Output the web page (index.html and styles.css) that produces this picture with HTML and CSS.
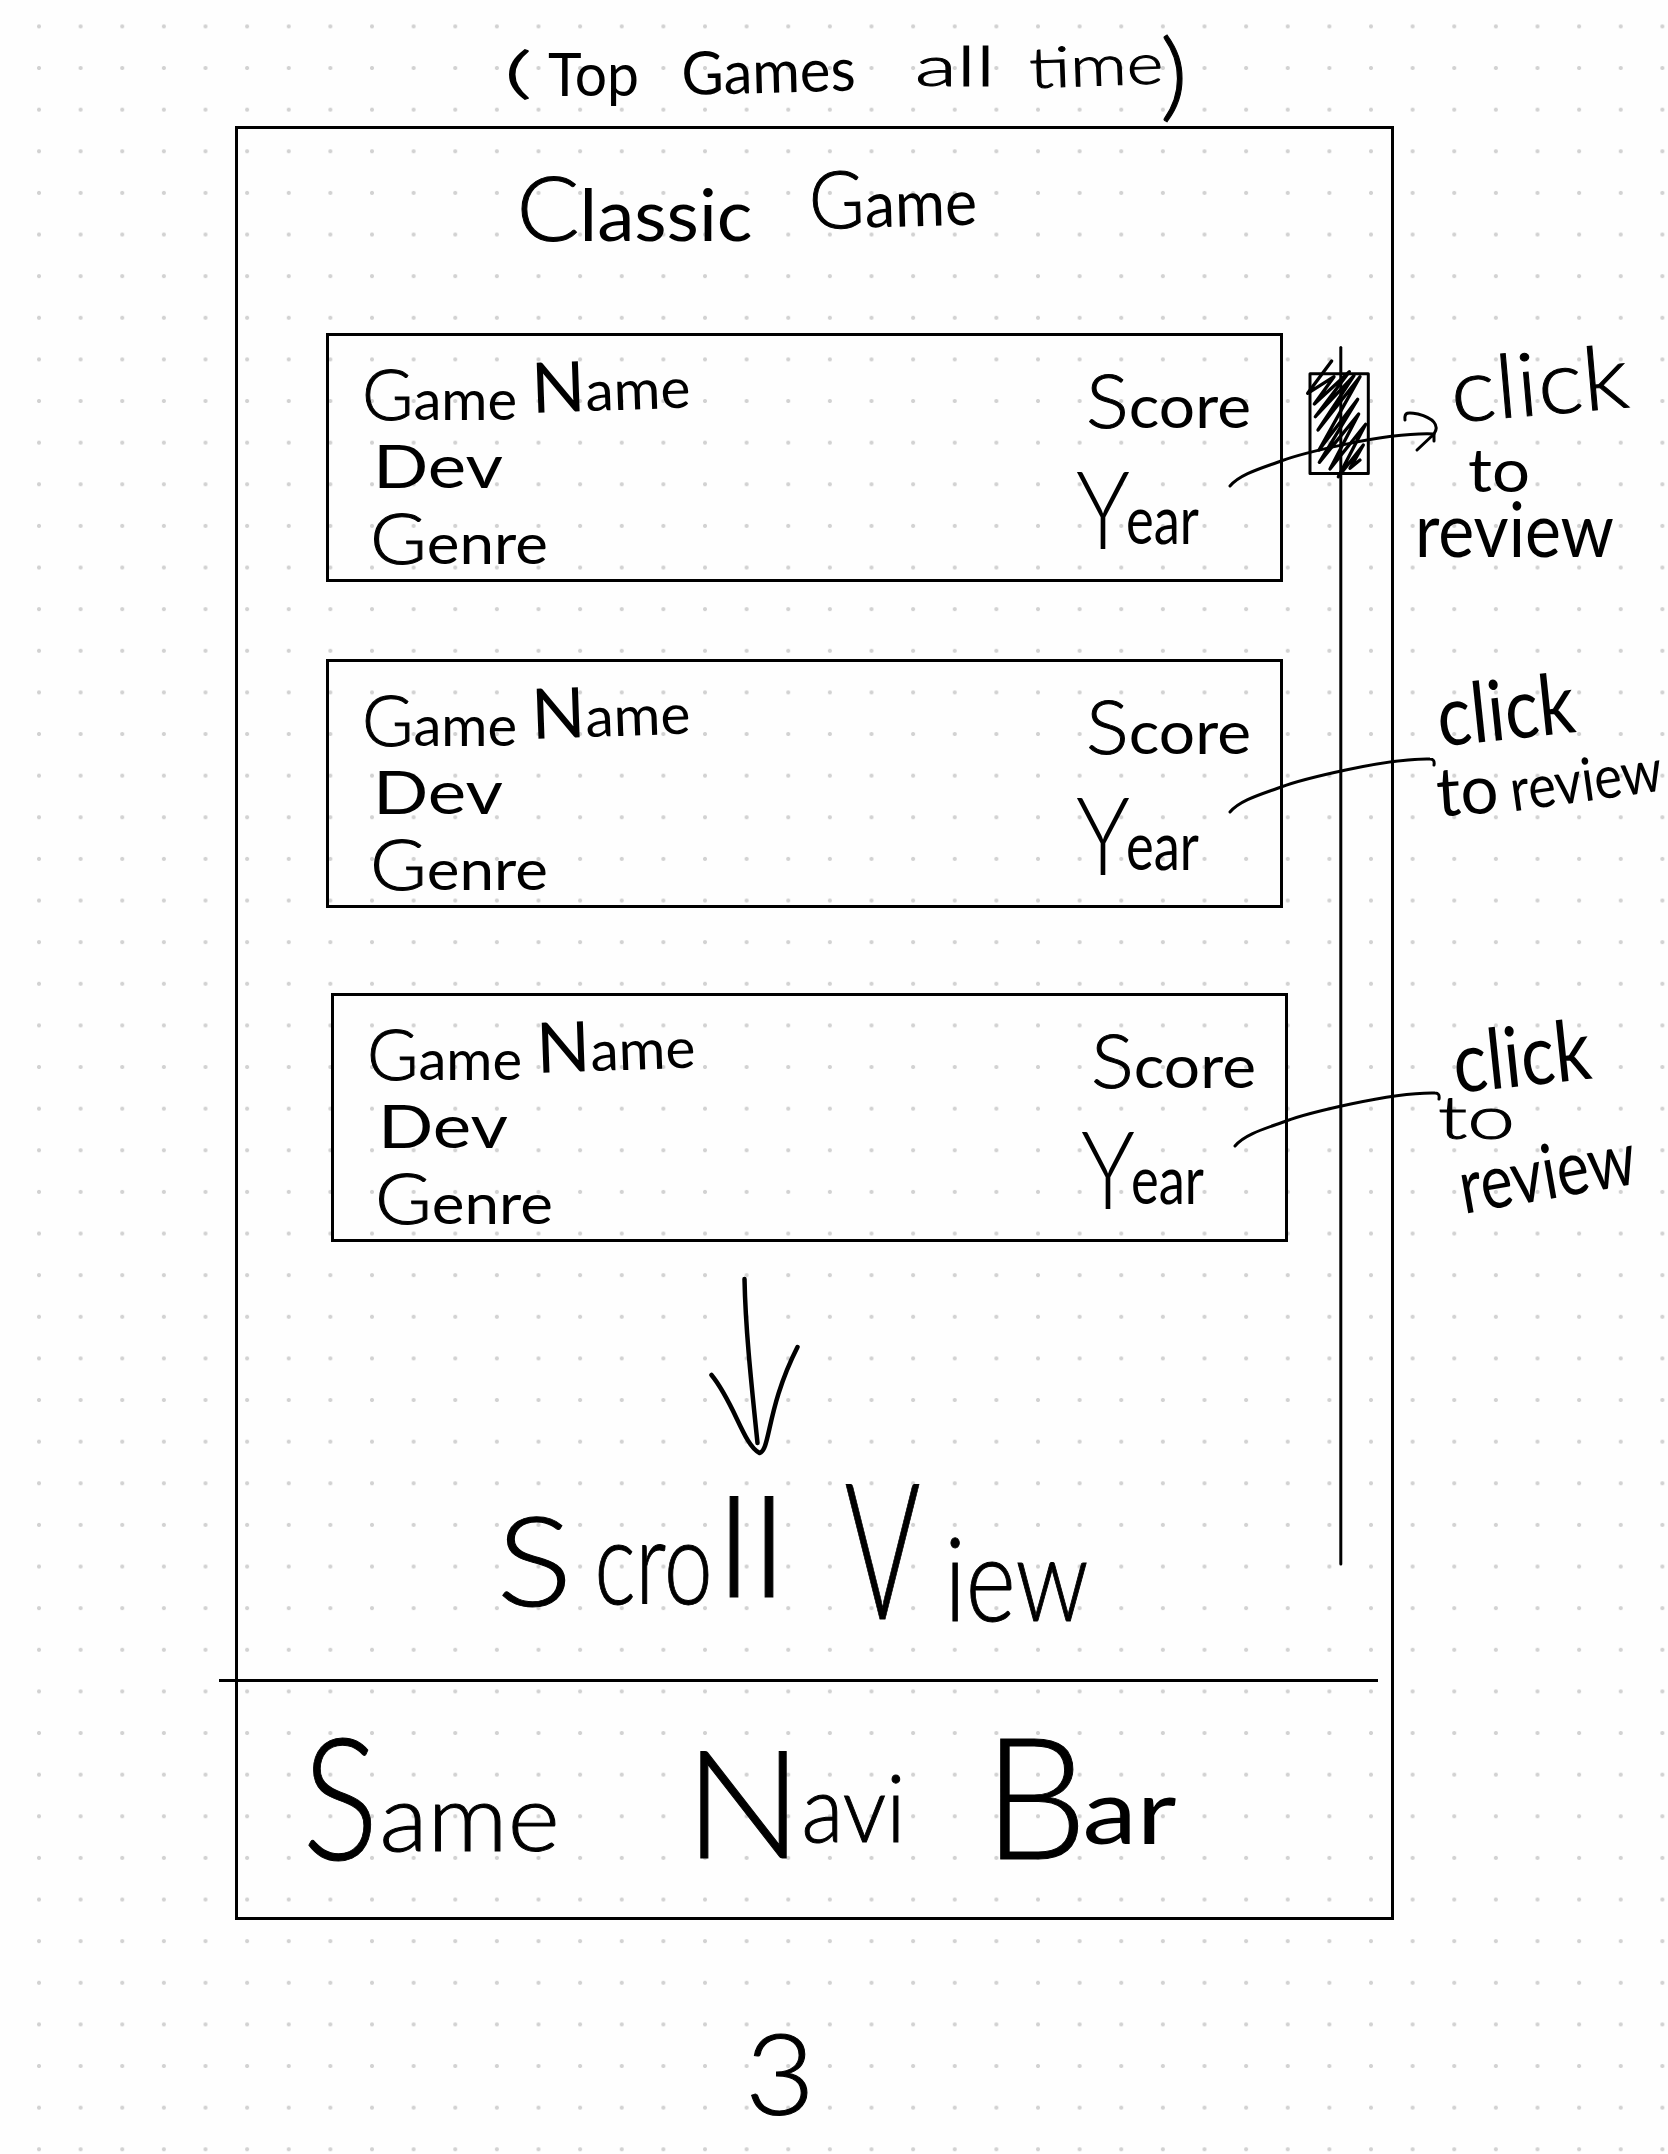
FILE: index.html
```html
<!DOCTYPE html>
<html lang="en">
<head>
<meta charset="utf-8">
<title>Classic Game wireframe</title>
<link rel="stylesheet" href="styles.css">
</head>
<body>
<main class="sheet">
  <header class="caption">
    <svg width="1668" height="126" viewBox="0 0 1668 126">
      <text class="s56 light" x="504" y="92" textLength="28" lengthAdjust="spacingAndGlyphs">(</text>
      <text class="s60" x="548" y="96" textLength="91" lengthAdjust="spacingAndGlyphs">Top</text>
      <text class="s60" x="682" y="95" textLength="174" lengthAdjust="spacingAndGlyphs" transform="rotate(-1.5 682 95)">Games</text>
      <text class="s56 light" x="915" y="86" textLength="80" lengthAdjust="spacingAndGlyphs">all</text>
      <text class="s56 light" x="1030" y="88" textLength="134" lengthAdjust="spacingAndGlyphs" transform="rotate(-2 1030 88)">time</text>
      <text class="s96 light" x="1160" y="109" textLength="28" lengthAdjust="spacingAndGlyphs">)</text>
    </svg>
  </header>

  <section class="frame">
    <svg class="heading" width="1153.5" height="203.5" viewBox="237.5 129 1153.5 203.5">
      <text class="s72" x="516" y="241" textLength="236" lengthAdjust="spacingAndGlyphs"><tspan class="cap thin">C</tspan>lassic</text>
      <text class="s64" x="809" y="229" textLength="168" lengthAdjust="spacingAndGlyphs" transform="rotate(-1.5 809 229)"><tspan class="cap thin">G</tspan>ame</text>
    </svg>

    <div class="cards">
      <article class="card">
        <div class="info">
          <svg width="400" height="100"><text class="s56" x="33" y="84" textLength="155" lengthAdjust="spacingAndGlyphs"><tspan class="cap thin">G</tspan>ame</text><text class="s56" x="203" y="77" textLength="159" lengthAdjust="spacingAndGlyphs" transform="rotate(-2 203 77)"><tspan class="cap">N</tspan>ame</text></svg>
          <svg width="400" height="60"><text class="s60" x="44" y="52" textLength="130" lengthAdjust="spacingAndGlyphs">Dev</text></svg>
          <svg width="400" height="80"><text class="s56" x="41" y="68" textLength="178" lengthAdjust="spacingAndGlyphs"><tspan class="cap thin">G</tspan>enre</text></svg>
        </div>
        <div class="stats">
          <svg width="230" height="110"><text class="s60" x="36" y="92" textLength="165" lengthAdjust="spacingAndGlyphs"><tspan class="cap thin">S</tspan>core</text></svg>
          <svg width="230" height="110"><text class="s68"><tspan class="s108" x="26" y="103" textLength="54" lengthAdjust="spacingAndGlyphs">Y</tspan><tspan x="76" y="98" textLength="73" lengthAdjust="spacingAndGlyphs">ear</tspan></text></svg>
        </div>
      </article>
      <article class="card">
        <div class="info">
          <svg width="400" height="100"><text class="s56" x="33" y="84" textLength="155" lengthAdjust="spacingAndGlyphs"><tspan class="cap thin">G</tspan>ame</text><text class="s56" x="203" y="77" textLength="159" lengthAdjust="spacingAndGlyphs" transform="rotate(-2 203 77)"><tspan class="cap">N</tspan>ame</text></svg>
          <svg width="400" height="60"><text class="s60" x="44" y="52" textLength="130" lengthAdjust="spacingAndGlyphs">Dev</text></svg>
          <svg width="400" height="80"><text class="s56" x="41" y="68" textLength="178" lengthAdjust="spacingAndGlyphs"><tspan class="cap thin">G</tspan>enre</text></svg>
        </div>
        <div class="stats">
          <svg width="230" height="110"><text class="s60" x="36" y="92" textLength="165" lengthAdjust="spacingAndGlyphs"><tspan class="cap thin">S</tspan>core</text></svg>
          <svg width="230" height="110"><text class="s68"><tspan class="s108" x="26" y="103" textLength="54" lengthAdjust="spacingAndGlyphs">Y</tspan><tspan x="76" y="98" textLength="73" lengthAdjust="spacingAndGlyphs">ear</tspan></text></svg>
        </div>
      </article>
      <article class="card card-last">
        <div class="info">
          <svg width="400" height="100"><text class="s56" x="33" y="84" textLength="155" lengthAdjust="spacingAndGlyphs"><tspan class="cap thin">G</tspan>ame</text><text class="s56" x="203" y="77" textLength="159" lengthAdjust="spacingAndGlyphs" transform="rotate(-2 203 77)"><tspan class="cap">N</tspan>ame</text></svg>
          <svg width="400" height="60"><text class="s60" x="44" y="52" textLength="130" lengthAdjust="spacingAndGlyphs">Dev</text></svg>
          <svg width="400" height="80"><text class="s56" x="41" y="68" textLength="178" lengthAdjust="spacingAndGlyphs"><tspan class="cap thin">G</tspan>enre</text></svg>
        </div>
        <div class="stats">
          <svg width="230" height="110"><text class="s60" x="36" y="92" textLength="165" lengthAdjust="spacingAndGlyphs"><tspan class="cap thin">S</tspan>core</text></svg>
          <svg width="230" height="110"><text class="s68"><tspan class="s108" x="26" y="103" textLength="54" lengthAdjust="spacingAndGlyphs">Y</tspan><tspan x="76" y="98" textLength="73" lengthAdjust="spacingAndGlyphs">ear</tspan></text></svg>
        </div>
      </article>
    </div>

    <svg class="scroll-hint" width="1153.5" height="437" viewBox="237.5 1242 1153.5 437">
      <path class="pen bold" d="M744 1279C745 1330 751 1385 757 1443"/>
      <path class="pen bold" d="M711 1375C734 1403 743 1445 759 1453C770 1450 766 1408 797 1347"/>
      <text class="s116 light"><tspan class="s124" x="496" y="1606" textLength="76" lengthAdjust="spacingAndGlyphs">S</tspan><tspan x="594" y="1604" textLength="118" lengthAdjust="spacingAndGlyphs">cro</tspan><tspan class="s138" x="716" y="1597" textLength="70" lengthAdjust="spacingAndGlyphs">ll</tspan></text>
      <text class="s116 light"><tspan class="s190" x="844" y="1619" textLength="76" lengthAdjust="spacingAndGlyphs">V</tspan><tspan x="944" y="1621" textLength="144" lengthAdjust="spacingAndGlyphs">iew</tspan></text>
    </svg>

    <div class="divider"></div>

    <nav class="navbar">
      <svg width="1153.5" height="234.5" viewBox="237.5 1682.5 1153.5 234.5">
        <text class="s92 light"><tspan class="s170" x="302" y="1860" textLength="76" lengthAdjust="spacingAndGlyphs">S</tspan><tspan x="379" y="1851" textLength="180" lengthAdjust="spacingAndGlyphs">ame</tspan></text>
        <text class="s92 light"><tspan class="s150" x="684" y="1858" textLength="118" lengthAdjust="spacingAndGlyphs">N</tspan><tspan x="801" y="1842" textLength="104" lengthAdjust="spacingAndGlyphs">avi</tspan></text>
        <text class="s92"><tspan class="s170 thin" x="983" y="1859" textLength="104" lengthAdjust="spacingAndGlyphs">B</tspan><tspan x="1082" y="1844" textLength="94" lengthAdjust="spacingAndGlyphs">ar</tspan></text>
      </svg>
    </nav>
  </section>

  <aside class="notes">
    <svg width="274" height="326" viewBox="1394 332.5 274 326">
      <text class="s88 light" x="1453" y="422" textLength="178" lengthAdjust="spacingAndGlyphs" transform="rotate(-5 1453 422)">click</text>
      <text class="s60" x="1468" y="491" textLength="62" lengthAdjust="spacingAndGlyphs">to</text>
      <text class="s76" x="1415" y="556" textLength="199" lengthAdjust="spacingAndGlyphs">review</text>
    </svg>
    <svg width="274" height="334.5" viewBox="1394 658.5 274 334.5">
      <text class="s84" x="1440" y="746" textLength="138" lengthAdjust="spacingAndGlyphs" transform="rotate(-6 1440 746)">click</text>
      <text class="s68" x="1438" y="816" textLength="62" lengthAdjust="spacingAndGlyphs" transform="rotate(-4 1438 816)">to</text>
      <text class="s60" x="1513" y="811" textLength="153" lengthAdjust="spacingAndGlyphs" transform="rotate(-8 1513 811)">review</text>
    </svg>
    <svg width="274" height="250" viewBox="1394 993 274 250">
      <text class="s84" x="1456" y="1093" textLength="138" lengthAdjust="spacingAndGlyphs" transform="rotate(-6 1456 1093)">click</text>
      <text class="s60 light" x="1438" y="1139" textLength="77" lengthAdjust="spacingAndGlyphs">to</text>
      <text class="s76" x="1464" y="1214" textLength="178" lengthAdjust="spacingAndGlyphs" transform="rotate(-10 1464 1214)">review</text>
    </svg>
  </aside>

  <footer class="page-number">
    <svg width="1668" height="234" viewBox="0 1920 1668 234">
      <text class="s112 light" x="745" y="2115" textLength="70" lengthAdjust="spacingAndGlyphs">3</text>
    </svg>
  </footer>

  <!-- scrollbar and note connectors, laid over the frame -->
  <svg class="overlay" width="1668" height="2154" viewBox="0 0 1668 2154">
    <path class="pen" d="M1340.800 347.500V1564"/>
    <rect class="pen" x="1310" y="373.700" width="58.300" height="99.800"/>
    <g transform="translate(1280 330) scale(.33333)">
      <path class="hatch" d="M155 93L83 190L162 140L103 222L208 125L106 260L222 137L114 300L240 140L117 360L233 208L118 397L236 252L150 417L257 283L175 440L250 345L210 415L240 390"/>
    </g>
    <path class="pen" d="M1230 486C1240 474 1262 468 1281 461S1385 432 1434 434"/>
    <path class="pen" d="M1405 420C1404 412 1408 412 1418 414C1433 418 1440 425 1434 434L1417 450M1434 434V441"/>
    <path class="pen" d="M1230 812C1240 800 1262 794 1281 787S1385 758 1430 759Q1435 759 1434 765"/>
    <path class="pen" d="M1235 1146C1245 1134 1267 1128 1286 1121S1390 1092 1435 1093Q1440 1093 1439 1099"/>
  </svg>
</main>
</body>
</html>
```
FILE: styles.css
```css
* {
  box-sizing: border-box;
}

body {
  margin: 0;
  background: #fff;
}

.sheet {
  position: relative;
  display: grid;
  grid-template-columns: 234.5px 1159.5px 274px;
  grid-template-rows: 126px 1794px 234px;
  width: 1668px;
  height: 2154px;
  overflow: hidden;
  background-color: #fefefe;
  background-image: radial-gradient(circle at center, #d2d2d2 1.6px, rgba(210, 210, 210, 0) 2.4px);
  background-size: 41.64px 41.63px;
  background-position: 18.2px 5.6px;
}

svg {
  display: block;
  overflow: visible;
}

text {
  font-family: Lato, "Open Sans", sans-serif;
  fill: #000;
}

.light,
.thin {
  font-weight: 300;
  stroke: #000;
  stroke-width: 1px;
}

.s56 { font-size: 56px; }
.s60 { font-size: 60px; }
.s64 { font-size: 64px; }
.s68 { font-size: 68px; }
.s72 { font-size: 72px; }
.s76 { font-size: 76px; }
.s84 { font-size: 84px; }
.s88 { font-size: 88px; }
.s92 { font-size: 92px; }
.s96 { font-size: 96px; }
.s108 { font-size: 108px; font-weight: 300; }
.s112 { font-size: 112px; }
.s116 { font-size: 116px; }
.s124 { font-size: 124px; }
.s138 { font-size: 138px; }
.s150 { font-size: 150px; }
.s170 { font-size: 170px; }
.s190 { font-size: 190px; }

.cap { font-size: 1.25em; }

.caption,
.page-number {
  grid-column: 1 / -1;
}

.frame {
  grid-column: 2;
  grid-row: 2;
  display: flex;
  flex-direction: column;
  border: 3px solid #000;
}

.cards {
  display: flex;
  flex-direction: column;
  gap: 77px;
  padding-left: 88.5px;
}

.card {
  display: flex;
  justify-content: space-between;
  width: 957px;
  height: 249px;
  border: 3px solid #000;
}

.card-last {
  margin: 8px 0 0 4.5px;
}

.divider {
  flex: none;
  width: 1159.5px;
  height: 3.5px;
  margin-left: -19px;
  background: #000;
}

.notes {
  grid-column: 3;
  grid-row: 2;
  padding-top: 206.5px;
}

.page-number {
  grid-row: 3;
}

.overlay {
  position: absolute;
  inset: 0;
}

.pen {
  fill: none;
  stroke: #000;
  stroke-width: 3px;
  stroke-linecap: round;
  stroke-linejoin: round;
}

.bold {
  stroke-width: 4.5px;
}

.hatch {
  fill: none;
  stroke: #000;
  stroke-width: 10px;
  stroke-linecap: round;
  stroke-linejoin: round;
}
```
